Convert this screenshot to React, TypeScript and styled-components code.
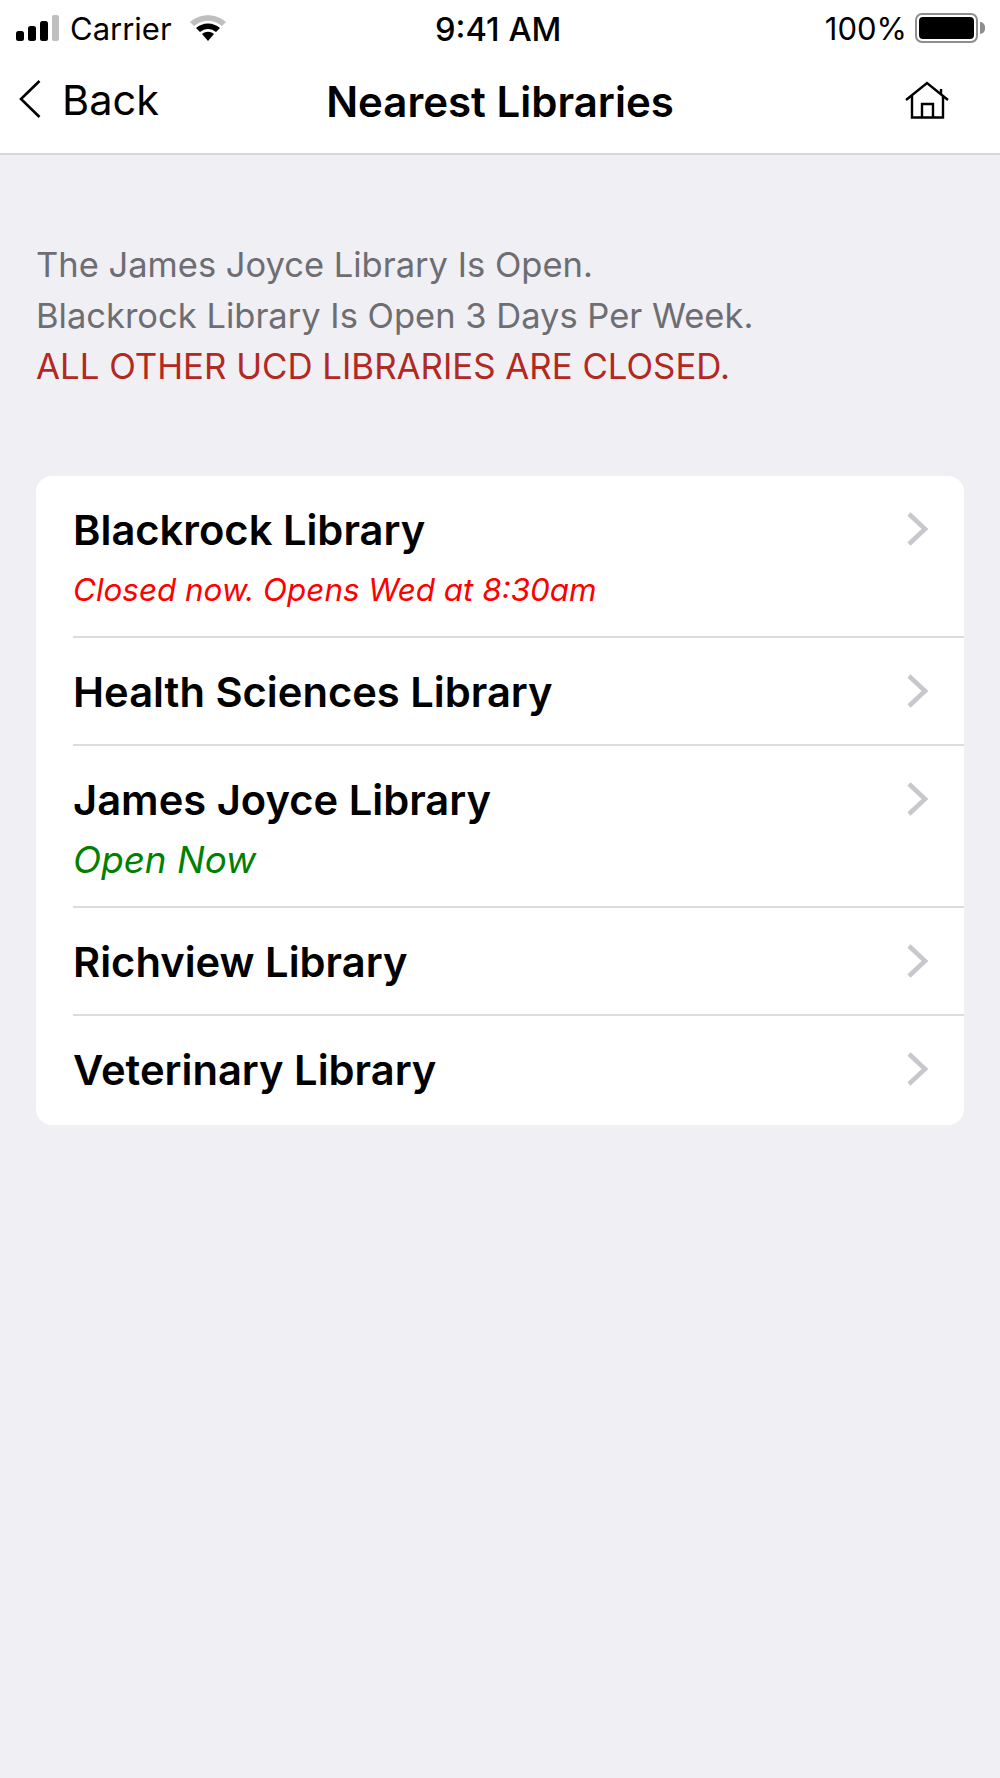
import React from 'react';
import styled, { createGlobalStyle } from 'styled-components';

const GlobalStyle = createGlobalStyle`
  html, body {
    margin: 0;
    padding: 0;
    background: #efeff4;
  }

  body {
    font-family: Inter, "Liberation Sans", sans-serif;
    color: #000;
  }
`;

const libraries = [
  { name: 'Blackrock Library', status: 'Closed now. Opens Wed at 8:30am', color: '#ff0000', size: 31.4 },
  { name: 'Health Sciences Library' },
  { name: 'James Joyce Library', status: 'Open Now', color: '#008000', size: 36.8 },
  { name: 'Richview Library' },
  { name: 'Veterinary Library' },
];

const App = () => (
  <Page>
    <GlobalStyle />
    <Header>
      <StatusBar>
        <StatusLeft>
          <svg width="45" height="28" viewBox="0 0 45 28">
            <rect x="1" y="17" width="8" height="10" rx="2.5" fill="#000" />
            <rect x="13" y="12" width="8" height="15" rx="2.5" fill="#000" />
            <rect x="25" y="7" width="8" height="20" rx="2.5" fill="#000" />
            <rect x="37" y="1" width="7" height="26" rx="2" fill="#bfbfbf" />
          </svg>
          <Carrier>Carrier</Carrier>
          <svg width="38" height="28" viewBox="0 0 38 28">
            <path d="M1 8 C11 -1 27 -1 37 8 L33 12 C24 5 14 5 5 12 Z" fill="#bfbfbf" />
            <path d="M7 14 C14 8 24 8 31 14 L27 18 C22 14 16 14 11 18 Z" fill="#000" />
            <path d="M13 20 C17 17 21 17 25 20 L19 27 Z" fill="#000" />
          </svg>
        </StatusLeft>
        <Clock>9:41 AM</Clock>
        <StatusRight>
          <span>100%</span>
          <Battery>
            <BatteryFill />
          </Battery>
          <BatteryCap />
        </StatusRight>
      </StatusBar>
      <NavBar>
        <BackLink>
          <BackChevron width="24" height="40" viewBox="0 0 24 40" fill="none" stroke="#000" strokeWidth="2.6">
            <path d="M21.5 2 L3 20 L21.5 38" />
          </BackChevron>
          <span>Back</span>
        </BackLink>
        <Title>Nearest Libraries</Title>
        <HomeButton>
          <svg width="44" height="38" viewBox="0 0 44 38" fill="none" stroke="#000" strokeWidth="2.4">
            <path d="M1 19 L22 2 L43 19" />
            <path d="M7 15 V36.5 H38 V15" />
            <path d="M17 36.5 V23 H28 V36.5" />
            <path d="M36 8 V13" />
          </svg>
        </HomeButton>
      </NavBar>
    </Header>
    <Notice>
      <div>The James Joyce Library Is Open.</div>
      <div>Blackrock Library Is Open 3 Days Per Week.</div>
      <NoticeAlert>ALL OTHER UCD LIBRARIES ARE CLOSED.</NoticeAlert>
    </Notice>
    <Card>
      {libraries.map((library) => (
        <Row key={library.name}>
          <RowText>
            <RowTitle>{library.name}</RowTitle>
            {library.status && (
              <RowStatus $color={library.color} $size={library.size}>
                {library.status}
              </RowStatus>
            )}
          </RowText>
          <Chevron viewBox="0 0 22 34" fill="none" stroke="#c7c7cc" strokeWidth="4.6">
            <path d="M2 2 L18 17 L2 32" />
          </Chevron>
        </Row>
      ))}
    </Card>
  </Page>
);

const Page = styled.div`
  min-height: 1778px;
  background: #efeff4;
`;

const Header = styled.header`
  background: #fff;
  border-bottom: 2px solid #d6d6da;
`;

const StatusBar = styled.div`
  position: relative;
  display: flex;
  align-items: center;
  justify-content: space-between;
  height: 52px;
  padding: 4px 15px 0;
  box-sizing: border-box;
  font-size: 31px;
`;

const StatusLeft = styled.div`
  display: flex;
  align-items: center;
`;

const Carrier = styled.span`
  margin: 0 17px 0 10px;
`;

const Clock = styled.div`
  position: absolute;
  left: 435px;
  top: 9px;
  font-size: 32.7px;
  font-weight: 500;
`;

const StatusRight = styled.div`
  display: flex;
  align-items: center;
`;

const Battery = styled.div`
  width: 63px;
  height: 30px;
  margin-left: 8px;
  padding: 2px;
  box-sizing: border-box;
  border: 2px solid #8e8e8e;
  border-radius: 7px;
`;

const BatteryFill = styled.div`
  height: 100%;
  background: #000;
  border-radius: 4px;
`;

const BatteryCap = styled.div`
  width: 5px;
  height: 12px;
  margin-left: 2px;
  background: #8e8e8e;
  border-radius: 0 5px 5px 0;
`;

const NavBar = styled.nav`
  position: relative;
  display: flex;
  align-items: center;
  justify-content: space-between;
  height: 101px;
  box-sizing: border-box;
  padding: 0 51px 6px 18px;
`;

const BackLink = styled.div`
  display: flex;
  align-items: center;
  gap: 20px;
  font-size: 41.5px;
  line-height: 50px;
`;

const BackChevron = styled.svg`
  margin-top: -1px;
`;

const Title = styled.h1`
  position: absolute;
  left: 0;
  right: 0;
  margin: 4px 0 0;
  text-align: center;
  font-size: 42px;
  font-weight: 600;
`;

const HomeButton = styled.div`
  display: flex;
`;

const Notice = styled.section`
  padding: 84px 36px 0;
  font-size: 34.5px;
  line-height: 51px;
  color: #6d6d72;
`;

const NoticeAlert = styled.div`
  font-size: 34.8px;
  color: #b3281f;
`;

const Card = styled.section`
  margin: 84px 36px 0;
  background: #fff;
  border-radius: 16px;
  overflow: hidden;
`;

const Row = styled.div`
  display: flex;
  justify-content: space-between;
  margin-left: 37px;
  padding-right: 35px;
  border-bottom: 2px solid #dcdce0;

  &:last-child {
    padding-bottom: 3px;
    border-bottom: 0;
  }
`;

const RowText = styled.div`
  padding: 24px 0 22px;
`;

const RowTitle = styled.div`
  font-size: 41.7px;
  line-height: 60px;
  font-weight: 600;
`;

const RowStatus = styled.div<{ $color?: string; $size?: number }>`
  margin: 8px 0 2px;
  font-size: ${({ $size }) => $size}px;
  line-height: 44px;
  font-style: italic;
  color: ${({ $color }) => $color};
`;

const Chevron = styled.svg`
  width: 22px;
  height: 34px;
  margin-top: 36px;
`;

export default App;
